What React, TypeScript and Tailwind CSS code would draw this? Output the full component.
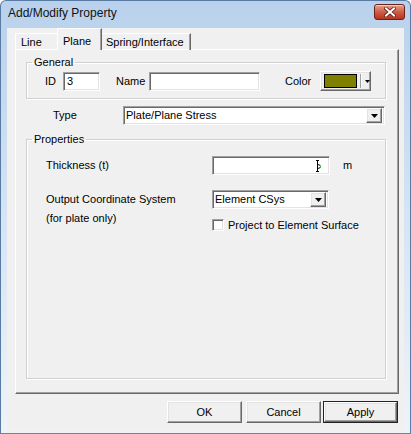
import React from "react";

const raised =
  "bg-[#f0f0f0] border border-t-white border-l-white border-r-[#696969] border-b-[#696969] shadow-[inset_-1px_-1px_0_#a0a0a0,inset_1px_1px_0_#e3e3e3]";
const sunken =
  "bg-white border border-t-[#a0a0a0] border-l-[#a0a0a0] border-r-white border-b-white shadow-[inset_1px_1px_0_#696969,inset_-1px_-1px_0_#e3e3e3]";
const groupBox =
  "border border-[#d0d0d0] shadow-[inset_1px_1px_0_#fff,1px_1px_0_#fff]";

function DownArrow() {
  return (
    <svg width="7" height="4" viewBox="0 0 7 4">
      <path d="M0 0H7L3.5 4Z" fill="#000" />
    </svg>
  );
}

function Combo({ value, width }: { value: string; width: string }) {
  return (
    <div className={`${sunken} ${width} h-[19px] flex items-center pl-[2px] pr-[2px]`}>
      <span className="flex-1 leading-none">{value}</span>
      <span className={`${raised} w-[16px] h-[15px] flex items-center justify-center`}>
        <DownArrow />
      </span>
    </div>
  );
}

function Button({ label, isDefault }: { label: string; isDefault?: boolean }) {
  if (isDefault) {
    return (
      <div className="w-[75px] h-[22px] border border-[#222]">
        <div className={`${raised} w-full h-full flex items-center justify-center`}>{label}</div>
      </div>
    );
  }
  return (
    <div className={`${raised} w-[75px] h-[22px] flex items-center justify-center`}>{label}</div>
  );
}

function CloseButton() {
  return (
    <div className="mt-[3px] w-[31px] h-[16px] rounded-[3px] border border-[#6c2116] bg-gradient-to-b from-[#e3a08f] via-[#cf5c45] to-[#b7321c] shadow-[inset_0_1px_0_rgba(255,255,255,0.5)] flex items-center justify-center">
      <svg width="12" height="10" viewBox="0 0 12 10">
        <path d="M2 1.5L10 8.5M10 1.5L2 8.5" stroke="#5a1a10" strokeWidth="3.6" strokeLinecap="square" />
        <path d="M2 1.5L10 8.5M10 1.5L2 8.5" stroke="#fff" strokeWidth="2" strokeLinecap="square" />
      </svg>
    </div>
  );
}

// I-beam mouse pointer resting in the thickness field
function Caret() {
  return (
    <svg width="6" height="12" viewBox="0 0 6 12">
      <path d="M0 0.5H3M1.5 0.5V11.5M0 11.5H3M1.5 4.5Q4.5 4.5 4.5 6.5Q4.5 8.5 1.5 8.5" stroke="#000" strokeWidth="1" fill="none" />
      <rect x="4" y="5" width="1" height="2" fill="#3bd13b" />
    </svg>
  );
}

export default function App() {
  return (
    <div className="w-[411px] h-[434px] flex flex-col rounded-t-[6px] border border-[#587ba4] border-b-[#2f9ad8] bg-gradient-to-b from-[#b9d1ec] via-[#d6e4f3] to-[#eef3f8] font-['Liberation_Sans',Arial,sans-serif] text-[11px] text-black">
      {/* title bar */}
      <div className="h-[27px] flex items-start justify-between pl-[7px] pr-[5px]">
        <span className="mt-[5px] text-[12px] leading-[14px] text-[#111]">Add/Modify Property</span>
        <CloseButton />
      </div>

      {/* client area */}
      <div className="flex-1 mx-[6px] mb-[2px] bg-[#f0f0f0] flex flex-col">
        {/* tabs */}
        <div className="h-[22px] pl-[8px] flex items-end -mb-[1px] relative z-10">
          <div className="w-[42px] h-[17px] border-t border-l border-white flex items-center pl-[5px]">Line</div>
          <div className="w-[45px] h-[22px] border-t border-l border-white border-r border-r-[#696969] shadow-[inset_-1px_0_0_#a0a0a0] bg-[#f0f0f0] flex items-start pl-[5px] pt-[4px]">
            Plane
          </div>
          <div className="w-[89px] h-[17px] border-t border-white border-r border-r-[#696969] shadow-[inset_-1px_0_0_#a0a0a0] flex items-center pl-[4px]">
            Spring/Interface
          </div>
        </div>

        {/* tab page */}
        <div className="ml-[8px] w-[384px] h-[345px] border border-t-white border-l-white border-r-[#696969] border-b-[#696969] shadow-[inset_-1px_-1px_0_#a0a0a0] flex flex-col pl-[10px]">
          <fieldset className={`${groupBox} mt-[6px] w-[360px] pb-[7px]`}>
            <legend className="ml-[5px] px-[2px] leading-[13px]">General</legend>
            <div className="mt-[2px] flex items-center pl-[18px]">
              <span className="w-[18px]">ID</span>
              <div className={`${sunken} w-[37px] h-[19px] flex items-center pl-[3px]`}>3</div>
              <span className="ml-[16px] w-[33px]">Name</span>
              <div className={`${sunken} w-[111px] h-[19px]`} />
              <span className="ml-[25px] w-[35px]">Color</span>
              <div className={`${raised} w-[51px] h-[20px] flex items-center pl-[3px]`}>
                <span className="w-[33px] h-[14px] bg-[#808000] border border-black" />
                <span className="ml-[3px] w-px h-[14px] bg-[#a0a0a0] shadow-[1px_0_0_#fff]" />
                <span className="ml-[4px] flex items-center">
                  <svg width="5" height="3" viewBox="0 0 5 3">
                    <path d="M0 0H5L2.5 3Z" fill="#000" />
                  </svg>
                </span>
              </div>
            </div>
          </fieldset>

          <div className="mt-[7px] flex items-center">
            <span className="ml-[27px] w-[70px]">Type</span>
            <Combo value="Plate/Plane Stress" width="w-[262px]" />
          </div>

          <fieldset className={`${groupBox} mt-[8px] w-[360px] flex-1 mb-[14px]`}>
            <legend className="ml-[5px] px-[2px] leading-[13px]">Properties</legend>
            <div className="pl-[19px] flex flex-col">
              <div className="mt-[10px] flex items-center">
                <span className="w-[166px]">Thickness (t)</span>
                <div className={`${sunken} w-[118px] h-[19px] flex items-center justify-end pr-[7px]`}>
                  <Caret />
                </div>
                <span className="ml-[13px]">m</span>
              </div>

              <div className="mt-[15px] flex">
                <div className="w-[166px] flex flex-col leading-[19px]">
                  <span>Output Coordinate System</span>
                  <span>(for plate only)</span>
                </div>
                <div className="flex flex-col">
                  <Combo value="Element CSys" width="w-[117px]" />
                  <label className="mt-[10px] flex items-center">
                    <span className={`${sunken} w-[12px] h-[12px]`} />
                    <span className="ml-[4px] leading-none">Project to Element Surface</span>
                  </label>
                </div>
              </div>
            </div>
          </fieldset>
        </div>

        {/* dialog buttons */}
        <div className="mt-[7px] flex justify-end pr-[6px]">
          <Button label="OK" />
          <div className="ml-[4px]">
            <Button label="Cancel" />
          </div>
          <div className="ml-[2px]">
            <Button label="Apply" isDefault />
          </div>
        </div>
      </div>
    </div>
  );
}
